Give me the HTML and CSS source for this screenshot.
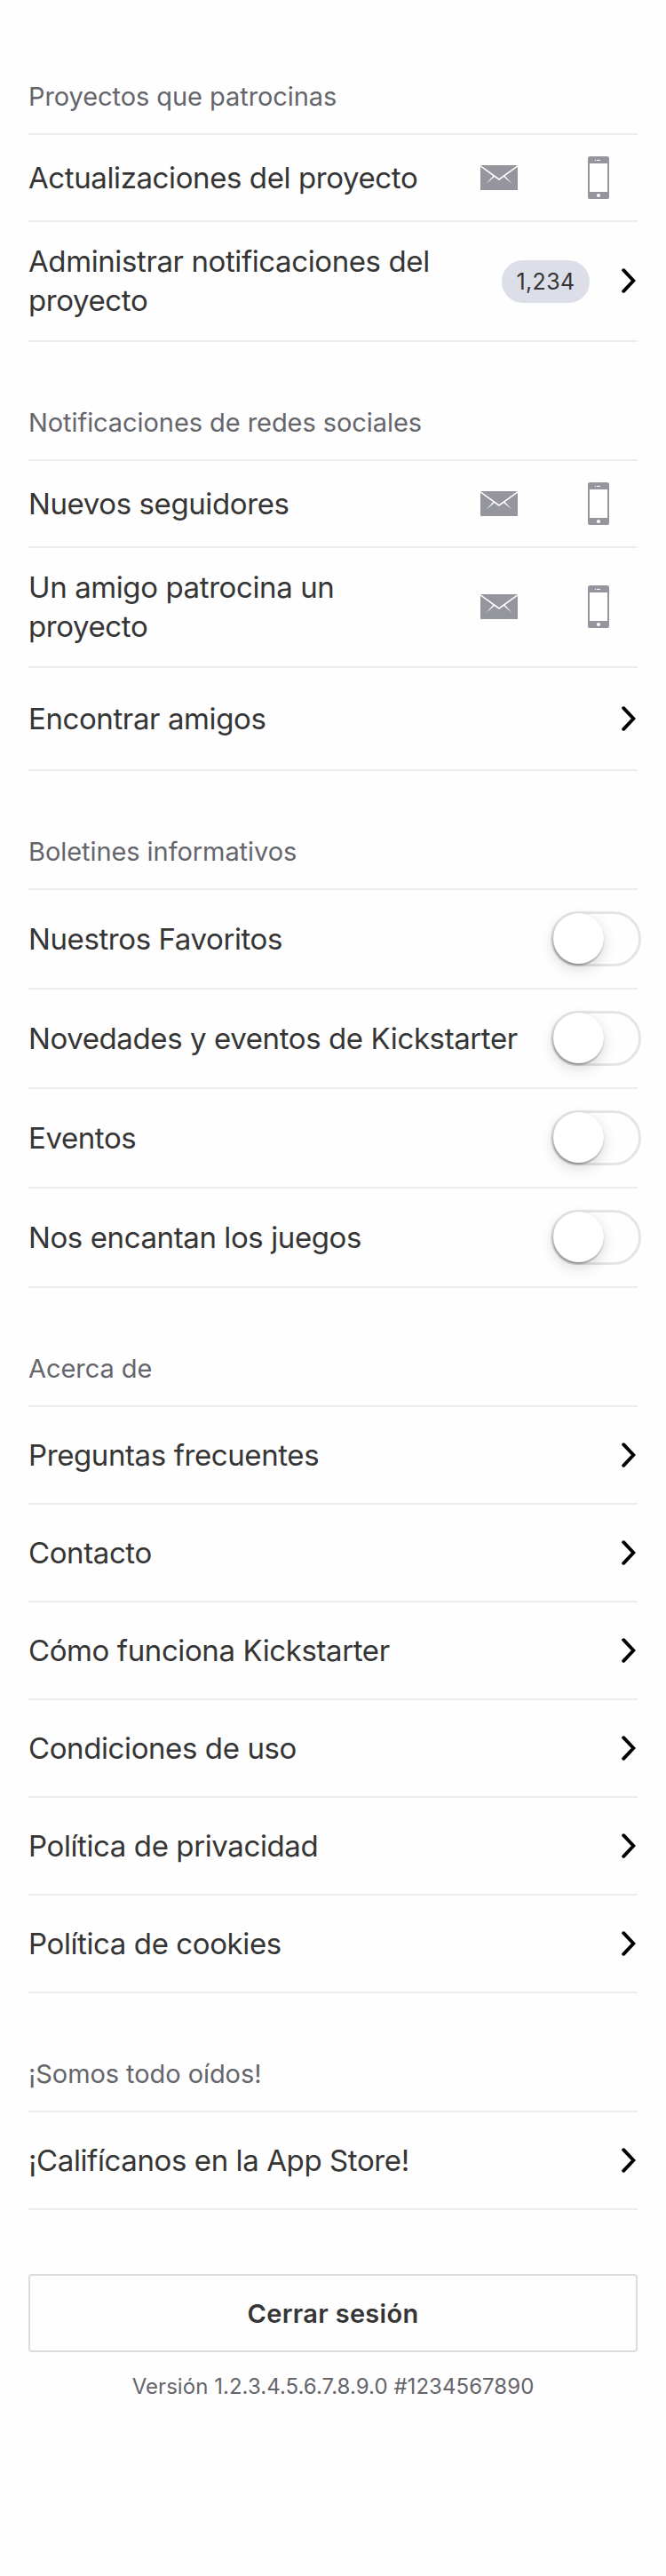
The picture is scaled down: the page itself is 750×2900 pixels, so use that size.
FILE: index.html
```html
<!DOCTYPE html>
<html lang="es">
<head>
<meta charset="utf-8">
<title>Configuración</title>
<link rel="stylesheet" href="styles.css">
</head>
<body>
<svg class="sprite" width="0" height="0" aria-hidden="true">
  <symbol id="mail" viewBox="0 0 42 28">
    <rect width="42" height="28" fill="#95959e"/>
    <path d="M0 .8L21 16L42 .8" fill="none" stroke="#fff" stroke-width="1.6"/>
    <path d="M14.8 11.4L6.6 20.8L16.4 12.6zM27.2 11.4L35.4 20.8L25.6 12.6z" fill="#fff"/>
  </symbol>
  <symbol id="phone" viewBox="0 0 24 48">
    <rect width="24" height="48" rx="2.6" fill="#95959e"/>
    <rect x="2" y="8" width="20" height="32" fill="#fff"/>
    <circle cx="12" cy="44" r="2.1" fill="#fff"/>
    <circle cx="8.5" cy="4.4" r=".6" fill="#fff"/>
    <path d="M10 4.4h4" stroke="#fff" stroke-width="1"/>
  </symbol>
  <symbol id="chevron" viewBox="0 0 16 28">
    <path d="M2.2 2.2L13.4 14L2.2 25.8" fill="none" stroke="#000" stroke-width="3.9" stroke-linecap="round"/>
  </symbol>
</svg>
<main class="settings">
  <section class="group">
    <h2 class="title">Proyectos que patrocinas</h2>
    <div class="row row-channels">
      <span class="label">Actualizaciones del proyecto</span>
      <span class="channels">
        <span class="channel"><svg class="mail"><use href="#mail"/></svg></span>
        <span class="channel"><svg class="phone"><use href="#phone"/></svg></span>
      </span>
    </div>
    <div class="row row-double">
      <span class="label">Administrar notificaciones del proyecto</span>
      <span class="badge">1,234</span>
      <svg class="chevron"><use href="#chevron"/></svg>
    </div>
  </section>

  <section class="group">
    <h2 class="title">Notificaciones de redes sociales</h2>
    <div class="row row-channels">
      <span class="label">Nuevos seguidores</span>
      <span class="channels">
        <span class="channel"><svg class="mail"><use href="#mail"/></svg></span>
        <span class="channel"><svg class="phone"><use href="#phone"/></svg></span>
      </span>
    </div>
    <div class="row row-double">
      <span class="label">Un amigo patrocina un proyecto</span>
      <span class="channels">
        <span class="channel"><svg class="mail"><use href="#mail"/></svg></span>
        <span class="channel"><svg class="phone"><use href="#phone"/></svg></span>
      </span>
    </div>
    <div class="row row-friends">
      <span class="label">Encontrar amigos</span>
      <svg class="chevron"><use href="#chevron"/></svg>
    </div>
  </section>

  <section class="group">
    <h2 class="title">Boletines informativos</h2>
    <div class="row row-switch"><span class="label">Nuestros Favoritos</span><span class="switch"><span class="knob"></span></span></div>
    <div class="row row-switch"><span class="label">Novedades y eventos de Kickstarter</span><span class="switch"><span class="knob"></span></span></div>
    <div class="row row-switch"><span class="label">Eventos</span><span class="switch"><span class="knob"></span></span></div>
    <div class="row row-switch"><span class="label">Nos encantan los juegos</span><span class="switch"><span class="knob"></span></span></div>
  </section>

  <section class="group">
    <h2 class="title">Acerca de</h2>
    <div class="row"><span class="label">Preguntas frecuentes</span><svg class="chevron"><use href="#chevron"/></svg></div>
    <div class="row"><span class="label">Contacto</span><svg class="chevron"><use href="#chevron"/></svg></div>
    <div class="row"><span class="label">Cómo funciona Kickstarter</span><svg class="chevron"><use href="#chevron"/></svg></div>
    <div class="row"><span class="label">Condiciones de uso</span><svg class="chevron"><use href="#chevron"/></svg></div>
    <div class="row"><span class="label">Política de privacidad</span><svg class="chevron"><use href="#chevron"/></svg></div>
    <div class="row"><span class="label">Política de cookies</span><svg class="chevron"><use href="#chevron"/></svg></div>
  </section>

  <section class="group">
    <h2 class="title">¡Somos todo oídos!</h2>
    <div class="row"><span class="label">¡Califícanos en la App Store!</span><svg class="chevron"><use href="#chevron"/></svg></div>
  </section>

  <button class="logout" type="button">Cerrar sesión</button>
  <p class="version">Versión 1.2.3.4.5.6.7.8.9.0 #1234567890</p>
</main>
</body>
</html>
```
FILE: styles.css
```css
* {
  box-sizing: border-box;
}

body {
  margin: 0;
  background: #fefefe;
  color: #353535;
  font-family: Inter, "Liberation Sans", sans-serif;
}

.sprite {
  position: absolute;
}

.settings {
  display: flex;
  flex-direction: column;
  min-height: 2900px;
  padding: 88px 32px 0;
}

.group {
  margin-bottom: 70px;
}

.title {
  height: 64px;
  margin: 0;
  border-bottom: 2px solid #ececec;
  color: #65656c;
  font-size: 29px;
  font-weight: 400;
  line-height: 41px;
  letter-spacing: -0.07px;
}

.row {
  display: flex;
  align-items: center;
  height: 110px;
  border-bottom: 2px solid #ececec;
}

.row-channels {
  height: 98px;
}

.row-double {
  height: 135px;
  padding-bottom: 1px;
}

.row-friends {
  height: 116px;
}

.row-switch {
  height: 112px;
}

.label {
  flex: 1;
  font-size: 33px;
  line-height: 44px;
  letter-spacing: -0.4px;
}

.channels {
  display: flex;
  gap: 24px;
  margin-left: 16px;
}

.channel {
  display: flex;
  align-items: center;
  justify-content: center;
  width: 88px;
}

.mail {
  width: 42px;
  height: 28px;
}

.phone {
  width: 24px;
  height: 48px;
}

.chevron {
  width: 16px;
  height: 28px;
  margin: 0 2px 1px 0;
}

.badge {
  width: 99px;
  height: 48px;
  margin: 2px 36px 0 24px;
  border-radius: 24px;
  background: #dcdee8;
  font-size: 25px;
  line-height: 48px;
  letter-spacing: 0.4px;
  text-align: center;
}

.switch {
  display: flex;
  align-items: center;
  width: 102px;
  height: 62px;
  margin-right: -4px;
  border: 3px solid #e5e5e5;
  border-radius: 31px;
}

.knob {
  width: 57px;
  height: 57px;
  margin: -1px 0 0 -0.5px;
  border-radius: 50%;
  background: #fff;
  box-shadow: 0 6px 16px rgba(0, 0, 0, 0.15), -0.5px 2px 2px rgba(0, 0, 0, 0.3), 0 0 1px rgba(0, 0, 0, 0.1);
}

.logout {
  height: 88px;
  margin: 2px 0 0;
  padding: 0;
  border: 2px solid #dcdcdc;
  border-radius: 4px;
  background: transparent;
  color: #353535;
  font-family: inherit;
  font-size: 29px;
  font-weight: 600;
  letter-spacing: 0.3px;
}

.version {
  margin: 22px 0 0;
  color: #65656c;
  font-size: 24px;
  line-height: 34px;
  letter-spacing: 0.04px;
  text-align: center;
}
```
